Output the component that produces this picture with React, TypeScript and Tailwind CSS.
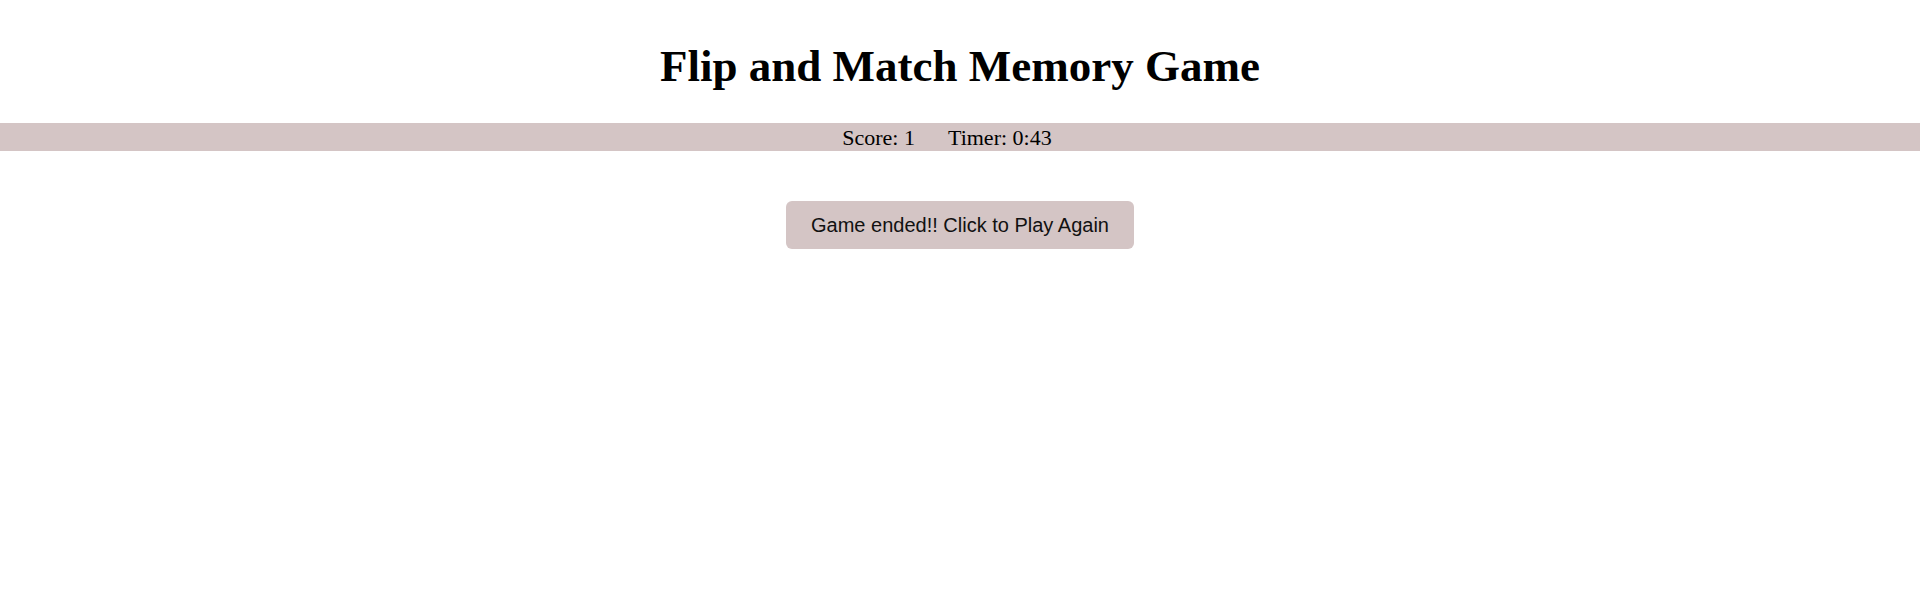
import React, { useState } from 'react';

export default function App() {
  const [score] = useState(1);
  const [time] = useState('0:43');

  return (
    <div className="min-h-screen bg-white text-black">
      {/* Title */}
      <h1 className="pt-[40px] mb-[31px] text-center text-[45px] leading-[normal] font-bold font-['Liberation_Serif','Times_New_Roman',serif]">
        Flip and Match Memory Game
      </h1>

      {/* Score bar */}
      <div className="h-[28px] bg-[#d4c5c5] flex items-center justify-center pt-[1px] pr-[26px] text-[22px] leading-[normal] font-['Liberation_Serif','Times_New_Roman',serif]">
        <span>Score: {score}</span>
        <span className="ml-[33px]">Timer: {time}</span>
      </div>

      {/* Restart */}
      <div className="flex justify-center mt-[50px]">
        <button className="w-[348px] h-[48px] rounded-md bg-[#d4c5c5] text-[20px] text-[#111] font-['Liberation_Sans',Arial,sans-serif] cursor-pointer">
          Game ended!! Click to Play Again
        </button>
      </div>
    </div>
  );
}
